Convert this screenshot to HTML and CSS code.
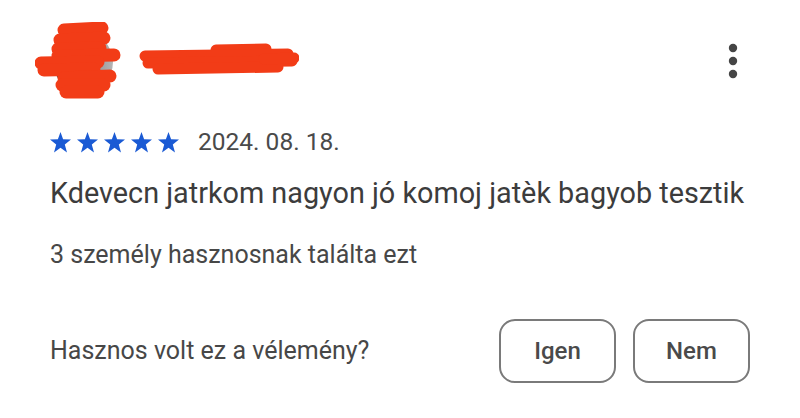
FILE: index.html
```html
<html>
    <head>
        <meta charset="utf-8">
        <meta name="viewport" content="width=device-width, initial-scale=1" />
        <link rel="stylesheet" href="styles.css">
    </head>
    <body>
        <div class="review">
            <div class="review-head">
                <svg class="avatar" width="86" height="78" viewBox="35 22 86 78">
                    <defs>
                        <linearGradient id="av" x1="0" y1="0" x2="1" y2="0">
                            <stop offset="0" stop-color="#4a4a4a"/>
                            <stop offset="1" stop-color="#b5b5b5"/>
                        </linearGradient>
                    </defs>
                    <circle cx="83" cy="62" r="30" fill="url(#av)"/>
                    <g stroke="#f23c17" stroke-width="13" stroke-linecap="round" stroke-linejoin="round" fill="none">
                        <path d="M64 30 L102 28"/>
                        <path d="M60 40 L104 38"/>
                        <path d="M58 49 L100 48"/>
                        <path d="M58 56 L114 55"/>
                        <path d="M41 63 L98 62"/>
                        <path d="M44 70 L94 69"/>
                        <path d="M64 78 L110 76"/>
                        <path d="M62 85 L104 85"/>
                        <path d="M66 92 L98 92"/>
                    </g>
                </svg>
                <svg class="name" width="162" height="36" viewBox="135 40 162 36">
                    <g stroke="#f23c17" stroke-width="11" stroke-linecap="round" fill="none">
                        <path d="M214 47 L264 46"/>
                        <path d="M143 53 L286 51"/>
                        <path d="M146 60 L290 58"/>
                        <path d="M156 66 L276 64"/>
                        <path d="M262 56 L292 55"/>
                    </g>
                </svg>
                <button class="menu" aria-label="Továbbiak">
                    <svg width="10" height="36" viewBox="0 0 10 36">
                        <circle cx="5" cy="5" r="4.2" fill="#454545"/>
                        <circle cx="5" cy="18" r="4.2" fill="#454545"/>
                        <circle cx="5" cy="31" r="4.2" fill="#454545"/>
                    </svg>
                </button>
            </div>

            <div class="rating">
                <div class="stars">
                    <svg width="21" height="21" viewBox="0 0 21 21"><polygon points="10.5,0 13.1,7.3 21,7.6 14.8,12.4 17,20.5 10.5,15.8 4,20.5 6.2,12.4 0,7.6 7.9,7.3"/></svg>
                    <svg width="21" height="21" viewBox="0 0 21 21"><polygon points="10.5,0 13.1,7.3 21,7.6 14.8,12.4 17,20.5 10.5,15.8 4,20.5 6.2,12.4 0,7.6 7.9,7.3"/></svg>
                    <svg width="21" height="21" viewBox="0 0 21 21"><polygon points="10.5,0 13.1,7.3 21,7.6 14.8,12.4 17,20.5 10.5,15.8 4,20.5 6.2,12.4 0,7.6 7.9,7.3"/></svg>
                    <svg width="21" height="21" viewBox="0 0 21 21"><polygon points="10.5,0 13.1,7.3 21,7.6 14.8,12.4 17,20.5 10.5,15.8 4,20.5 6.2,12.4 0,7.6 7.9,7.3"/></svg>
                    <svg width="21" height="21" viewBox="0 0 21 21"><polygon points="10.5,0 13.1,7.3 21,7.6 14.8,12.4 17,20.5 10.5,15.8 4,20.5 6.2,12.4 0,7.6 7.9,7.3"/></svg>
                </div>
                <span class="date">2024. 08. 18.</span>
            </div>

            <p class="review-text">Kdevecn jatrkom nagyon jó komoj jatèk bagyob tesztik</p>
            <p class="helpful-count">3 személy hasznosnak találta ezt</p>

            <div class="feedback">
                <span class="question">Hasznos volt ez a vélemény?</span>
                <div class="answers">
                    <button class="answer">Igen</button>
                    <button class="answer">Nem</button>
                </div>
            </div>
        </div>
    </body>
</html>
```

FILE: styles.css
```css
body {
    margin: 0;
    background: #fff;
    font-family: Roboto, 'Noto Sans', sans-serif;
    color: #444;
}

.review {
    padding: 22px 50px 0 50px;
}

.review-head {
    display: flex;
    align-items: center;
    height: 78px;
    margin-left: -15px;
}
.avatar {
    display: block;
}
.name {
    display: block;
    margin-left: 16px;
}
.menu {
    margin-left: auto;
    margin-right: -3px;
    width: 40px;
    height: 44px;
    border: none;
    background: none;
    padding: 0;
    display: flex;
    align-items: center;
    justify-content: center;
}

.rating {
    display: flex;
    align-items: center;
    height: 28px;
    margin-top: 28px;
}
.stars {
    display: flex;
    gap: 6px;
}
.stars svg {
    display: block;
    fill: #1a5ad4;
}
.date {
    margin-left: 19px;
    font-size: 24.5px;
    line-height: 28px;
    color: #4a4a4a;
}

.review-text {
    margin: 19px 0 0 0;
    font-size: 28.8px;
    line-height: 36px;
    color: #3c3c3c;
}
.helpful-count {
    margin: 29px 0 0 0;
    font-size: 25px;
    line-height: 30px;
    color: #474747;
}

.feedback {
    display: flex;
    align-items: center;
    justify-content: space-between;
    margin-top: 49px;
}
.question {
    font-size: 25px;
    line-height: 30px;
    color: #474747;
}
.answers {
    display: flex;
    gap: 17px;
}
.answer {
    width: 117px;
    height: 64px;
    border: 2px solid #7a7a7a;
    border-radius: 16px;
    background: #fff;
    font-family: Roboto, sans-serif;
    font-size: 24px;
    font-weight: 500;
    color: #4a4a4a;
    padding: 0;
}
```
